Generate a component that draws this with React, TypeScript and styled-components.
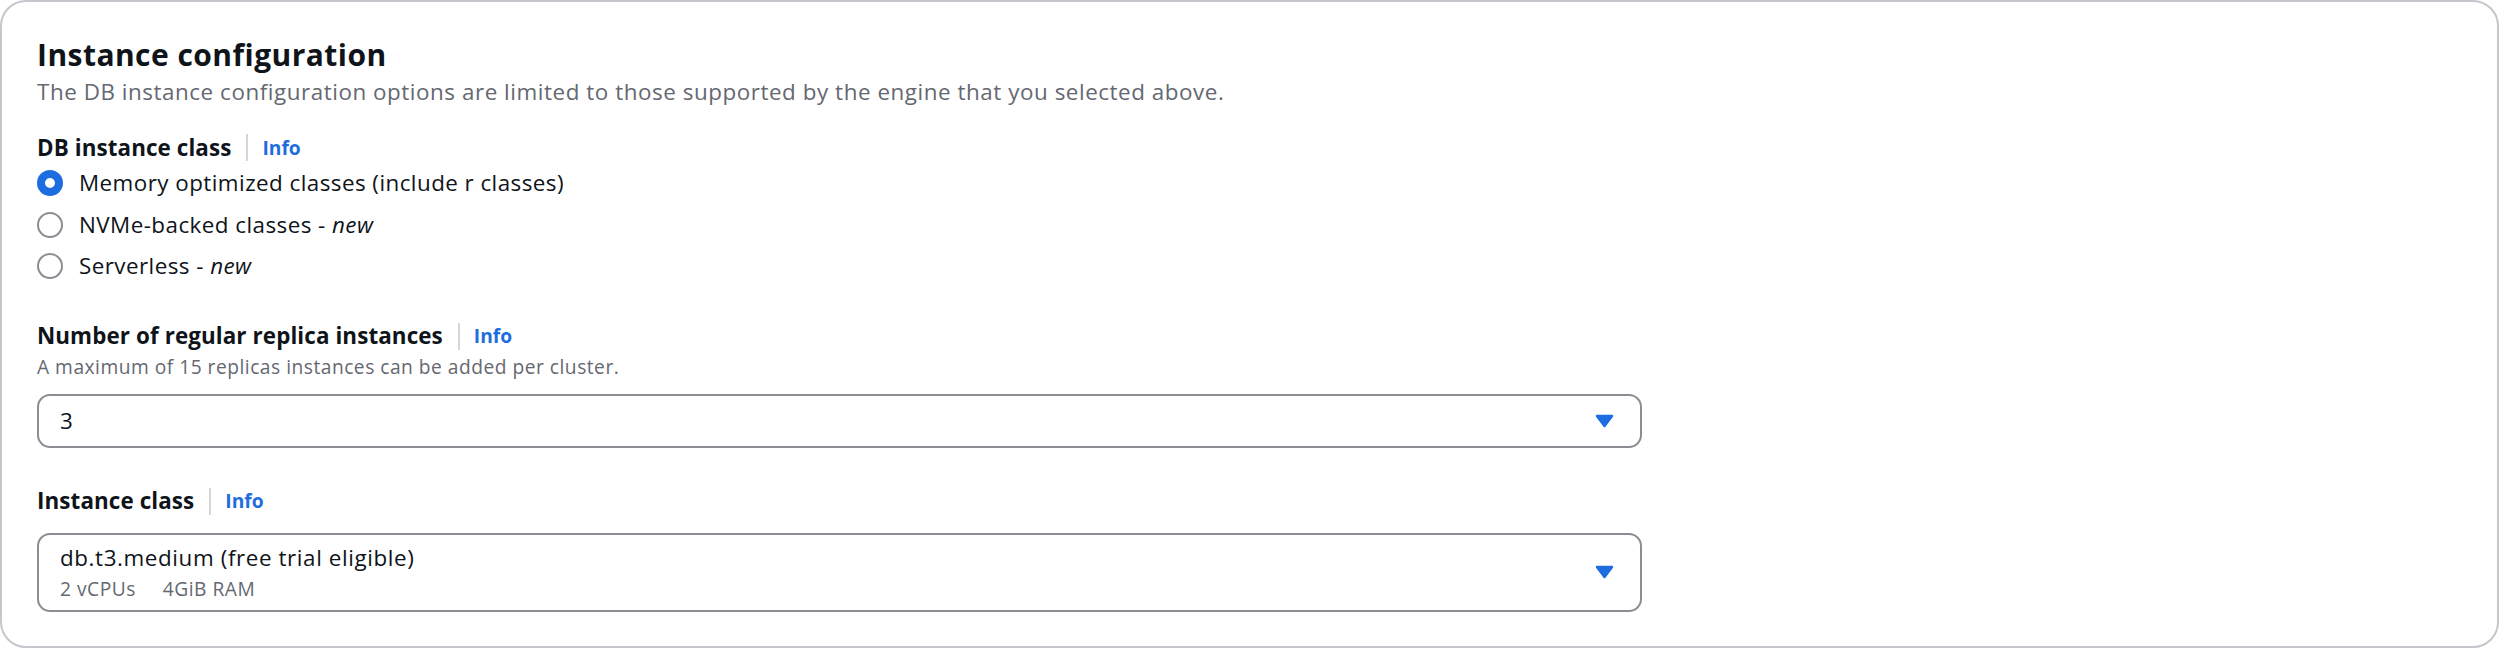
import React from "react";
import styled, { createGlobalStyle } from "styled-components";

const Global = createGlobalStyle`
  html, body { margin: 0; padding: 0; background: #ffffff; }
  body { font-family: "Open Sans", "Noto Sans", "Liberation Sans", Arial, sans-serif; color: #0f141a; }
  * { box-sizing: border-box; }
`;

const Card = styled.section`
  width: 2499px;
  height: 648px;
  border: 2px solid #c6c6cd;
  border-radius: 26px;
  background: #ffffff;
  padding: 35px 35px 0 35px;
  display: flex;
  flex-direction: column;
`;

const Title = styled.h2`
  margin: 0;
  font-size: 30px;
  line-height: 35.2px;
  font-weight: 700;
  letter-spacing: 0.45px;
  color: #0f141a;
`;

const Description = styled.p`
  margin: 3.5px 0 0 0;
  font-size: 22.4px;
  line-height: 32px;
  letter-spacing: 0.55px;
  color: #656871;
`;

const Field = styled.div<{ $top: number }>`
  margin-top: ${(p) => p.$top}px;
  display: flex;
  flex-direction: column;
`;

const LabelRow = styled.div`
  display: flex;
  align-items: center;
  font-size: 22.4px;
  line-height: 32px;
`;

const Label = styled.span`
  font-weight: 700;
  letter-spacing: 0.1px;
  color: #0f141a;
`;

const Divider = styled.span`
  width: 2px;
  height: 27px;
  background: #d5d5da;
  margin: 0 14px 0 15px;
`;

const InfoLink = styled.a`
  color: #1d6de0;
  font-weight: 700;
  font-size: 19.2px;
  text-decoration: none;
`;

const Helper = styled.div`
  font-size: 19.2px;
  line-height: 25.6px;
  letter-spacing: 0.5px;
  color: #656871;
  margin-top: 2px;
`;

const RadioGroup = styled.div`
  display: flex;
  flex-direction: column;
  gap: 9.6px;
  margin-top: 3.6px;
`;

const RadioRow = styled.label`
  display: flex;
  align-items: center;
  gap: 16px;
  height: 32px;
  font-size: 22.4px;
  line-height: 32px;
  letter-spacing: 0.45px;
  color: #0f141a;
`;

const RadioDot = styled.span<{ $checked?: boolean }>`
  width: 26px;
  height: 26px;
  border-radius: 50%;
  flex: none;
  border: ${(p) => (p.$checked ? "8px solid #1d6de0" : "2px solid #8c8c94")};
  background: #ffffff;
`;

const Select = styled.div<{ $height: number; $top: number }>`
  margin-top: ${(p) => p.$top}px;
  width: 1605px;
  height: ${(p) => p.$height}px;
  border: 2px solid #8c8c94;
  border-radius: 13px;
  display: flex;
  align-items: center;
  justify-content: space-between;
  padding: 0 26px 0 21px;
`;

const SelectText = styled.div`
  display: flex;
  flex-direction: column;
`;

const Primary = styled.span`
  font-size: 22.4px;
  line-height: 32px;
  letter-spacing: 0.6px;
  color: #0f141a;
`;

const Secondary = styled.span`
  font-size: 19.2px;
  line-height: 25.6px;
  letter-spacing: 0.5px;
  color: #656871;
  display: flex;
  gap: 27px;
  margin-top: 2px;
`;

const Caret = () => (
  <svg width="19" height="14" viewBox="0 0 19 14" aria-hidden="true">
    <polygon
      points="2,2 17,2 9.5,12"
      fill="#1d6de0"
      stroke="#1d6de0"
      strokeWidth="2.5"
      strokeLinejoin="round"
    />
  </svg>
);

const LabelWithInfo = ({ text }: { text: string }) => (
  <LabelRow>
    <Label>{text}</Label>
    <Divider />
    <InfoLink href="#">Info</InfoLink>
  </LabelRow>
);

export default function App() {
  return (
    <>
      <Global />
      <Card>
        <Title>Instance configuration</Title>
        <Description>
          The DB instance configuration options are limited to those supported by the engine that you selected above.
        </Description>

        <Field $top={24}>
          <LabelWithInfo text="DB instance class" />
          <RadioGroup>
            <RadioRow>
              <RadioDot $checked />
              <span>Memory optimized classes (include r classes)</span>
            </RadioRow>
            <RadioRow>
              <RadioDot />
              <span>
                NVMe-backed classes - <i>new</i>
              </span>
            </RadioRow>
            <RadioRow>
              <RadioDot />
              <span>
                Serverless - <i>new</i>
              </span>
            </RadioRow>
          </RadioGroup>
        </Field>

        <Field $top={38}>
          <LabelWithInfo text="Number of regular replica instances" />
          <Helper>A maximum of 15 replicas instances can be added per cluster.</Helper>
          <Select $height={54} $top={14}>
            <Primary>3</Primary>
            <Caret />
          </Select>
        </Field>

        <Field $top={37}>
          <LabelWithInfo text="Instance class" />
          <Select $height={79} $top={15.6}>
            <SelectText>
              <Primary>db.t3.medium (free trial eligible)</Primary>
              <Secondary>
                <span>2 vCPUs</span>
                <span>4GiB RAM</span>
              </Secondary>
            </SelectText>
            <Caret />
          </Select>
        </Field>
      </Card>
    </>
  );
}
